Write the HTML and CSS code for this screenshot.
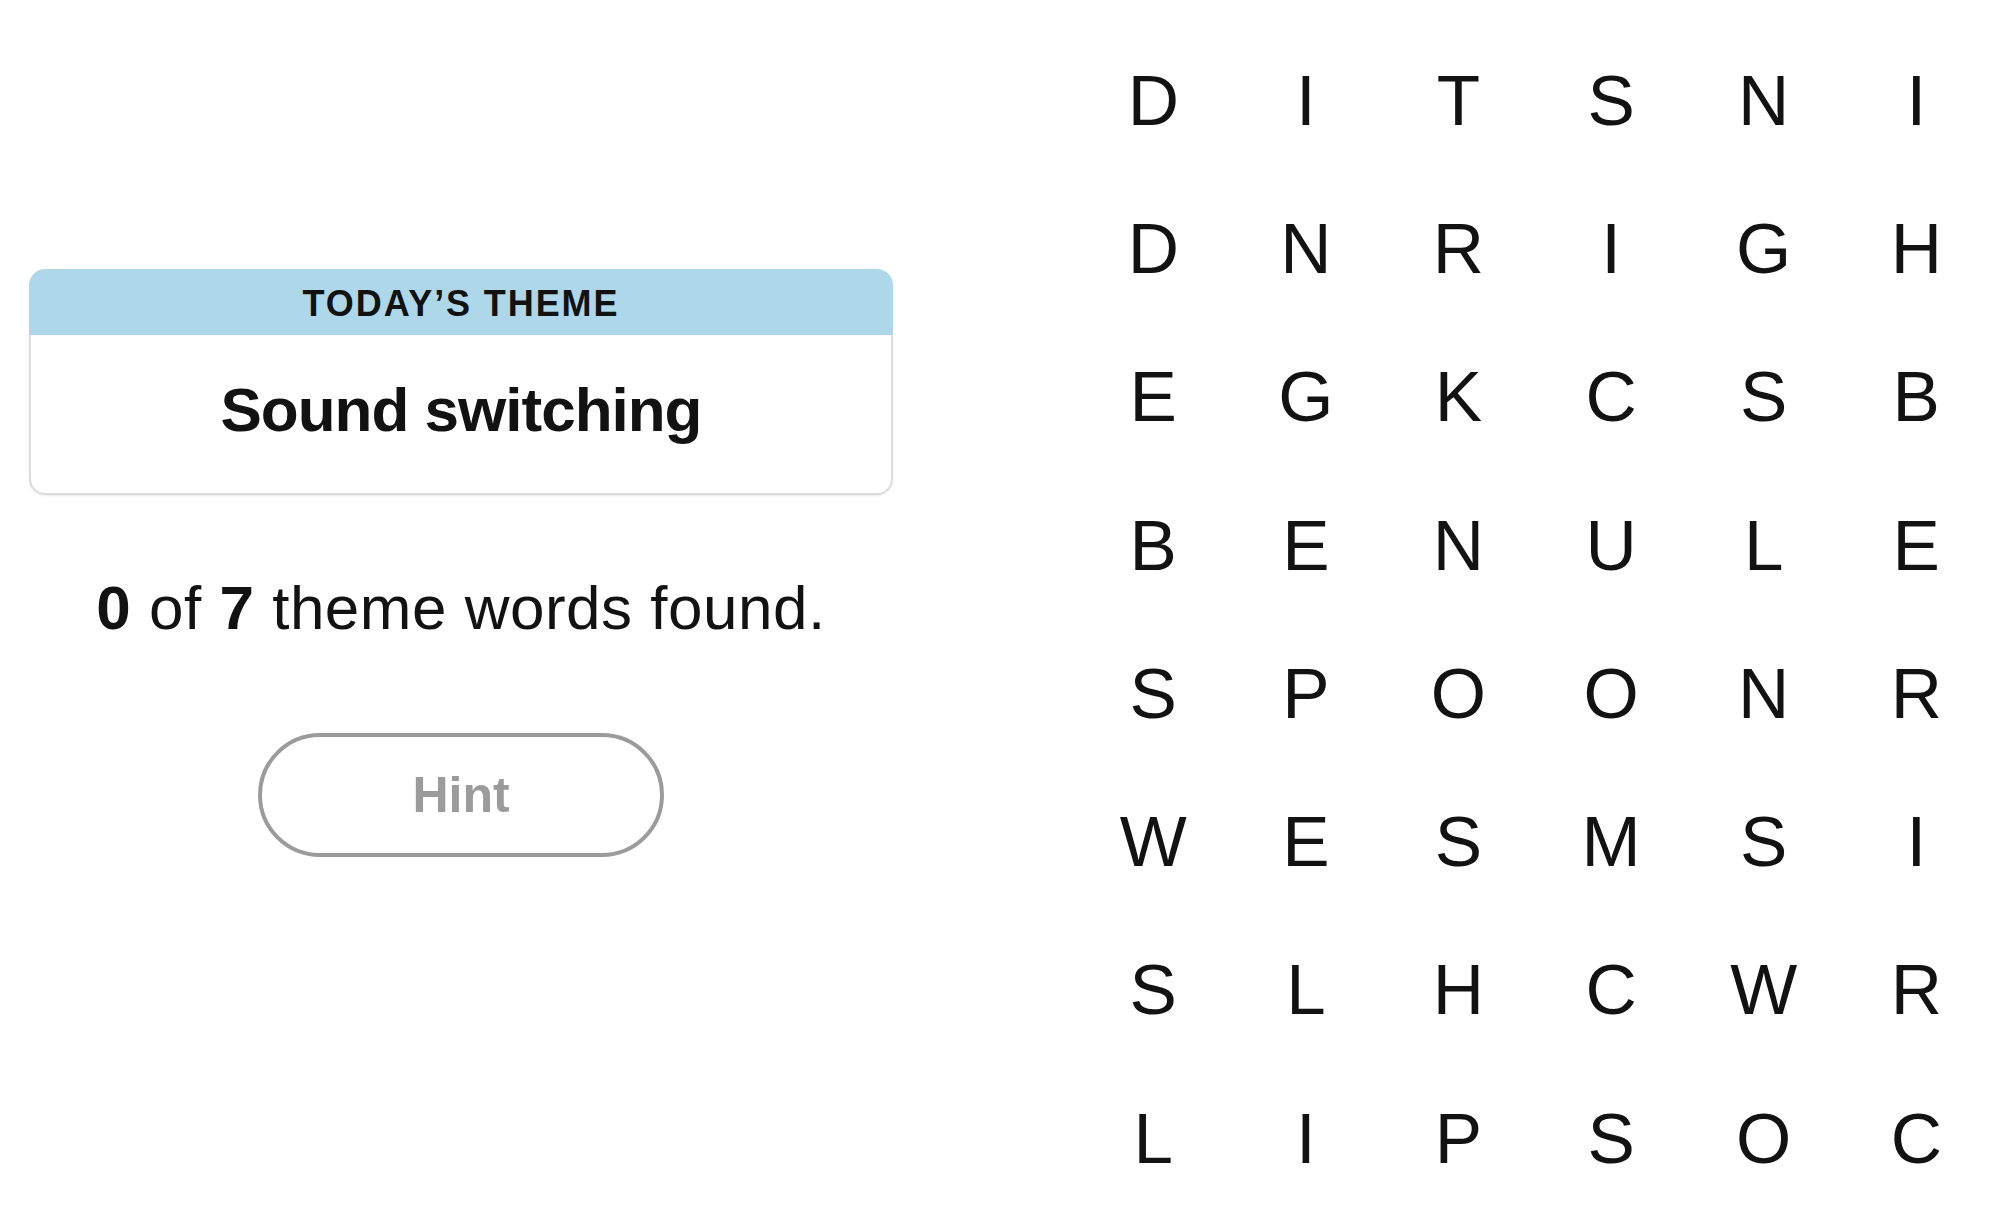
FILE: index.html
```html
<!DOCTYPE html>
<html lang="en">
<head>
<meta charset="utf-8">
<title>Strands</title>
<link rel="stylesheet" href="styles.css">
</head>
<body>
<div class="page">
  <section class="info">
    <div class="theme-card">
      <div class="theme-head">TODAY’S THEME</div>
      <div class="theme-body">Sound switching</div>
    </div>
    <p class="progress"><b>0</b> of <b>7</b> theme words found.</p>
    <button class="hint" type="button">Hint</button>
  </section>
  <section class="board">
    <span>D</span><span>I</span><span>T</span><span>S</span><span>N</span><span>I</span>
    <span>D</span><span>N</span><span>R</span><span>I</span><span>G</span><span>H</span>
    <span>E</span><span>G</span><span>K</span><span>C</span><span>S</span><span>B</span>
    <span>B</span><span>E</span><span>N</span><span>U</span><span>L</span><span>E</span>
    <span>S</span><span>P</span><span>O</span><span>O</span><span>N</span><span>R</span>
    <span>W</span><span>E</span><span>S</span><span>M</span><span>S</span><span>I</span>
    <span>S</span><span>L</span><span>H</span><span>C</span><span>W</span><span>R</span>
    <span>L</span><span>I</span><span>P</span><span>S</span><span>O</span><span>C</span>
  </section>
</div>
</body>
</html>
```
FILE: styles.css
```css
html, body {
  margin: 0;
  padding: 0;
  background: #ffffff;
}

body {
  font-family: "Liberation Sans", Arial, sans-serif;
  color: #121212;
}

.page {
  display: flex;
  align-items: flex-start;
}

.info {
  width: 864px;
  margin-left: 29px;
  padding-top: 269px;
  display: flex;
  flex-direction: column;
  align-items: center;
}

.theme-card {
  width: 100%;
  box-sizing: border-box;
}

.theme-head {
  background: #aed8ea;
  border-radius: 16px 16px 0 0;
  height: 66px;
  box-sizing: border-box;
  padding-top: 4px;
  display: flex;
  align-items: center;
  justify-content: center;
  font-size: 36px;
  font-weight: 700;
  letter-spacing: 1.9px;
}

.theme-body {
  border: 2px solid #dcdcdc;
  border-top: none;
  border-radius: 0 0 16px 16px;
  box-shadow: 0 1px 2px rgba(0, 0, 0, 0.08);
  height: 160px;
  box-sizing: border-box;
  padding-top: 35px;
  text-align: center;
  font-size: 62px;
  line-height: 80px;
  font-weight: 700;
  letter-spacing: -1px;
}

.progress {
  margin: 73px 0 0;
  font-size: 62px;
  line-height: 80px;
  text-align: center;
  white-space: nowrap;
  letter-spacing: 0.5px;
}

.progress b {
  font-weight: 700;
}

.hint {
  margin-top: 85px;
  width: 406px;
  height: 124px;
  border: 4px solid #9b9b9b;
  border-radius: 62px;
  background: #ffffff;
  color: #9b9b9b;
  font-family: "Liberation Sans", Arial, sans-serif;
  font-size: 50px;
  font-weight: 700;
  padding: 0;
}

.board {
  margin-left: 184px;
  margin-top: 26px;
  display: grid;
  grid-template-columns: repeat(6, 152.6px);
  grid-template-rows: repeat(8, 148.3px);
  align-items: center;
  justify-items: center;
  font-size: 71px;
  line-height: 1;
}
```
